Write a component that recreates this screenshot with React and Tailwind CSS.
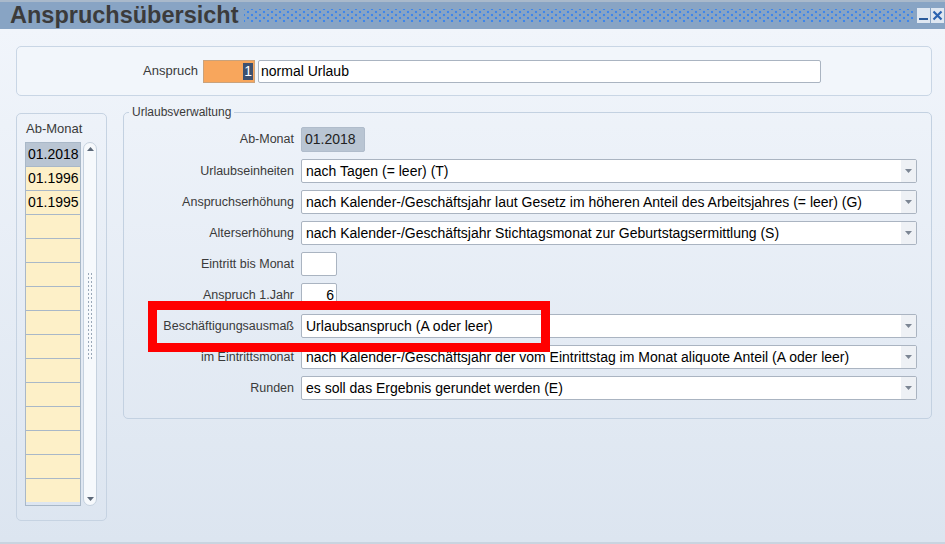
import React from 'react';

const font = { fontFamily: '"Liberation Sans", Arial, sans-serif' };

const rows = [
  { label: 'Urlaubseinheiten', value: 'nach Tagen (= leer) (T)' },
  {
    label: 'Anspruchserhöhung',
    value: 'nach Kalender-/Geschäftsjahr laut Gesetz im höheren Anteil des Arbeitsjahres (= leer) (G)',
  },
  { label: 'Alterserhöhung', value: 'nach Kalender-/Geschäftsjahr Stichtagsmonat zur Geburtstagsermittlung (S)' },
];

const rowsBottom = [
  { label: 'Beschäftigungsausmaß', value: 'Urlaubsanspruch (A oder leer)' },
  {
    label: 'im Eintrittsmonat',
    value: 'nach Kalender-/Geschäftsjahr der vom Eintrittstag im Monat aliquote Anteil (A oder leer)',
  },
  { label: 'Runden', value: 'es soll das Ergebnis gerundet werden (E)' },
];

const months = ['01.2018', '01.1996', '01.1995', '', '', '', '', '', '', '', '', '', '', '', ''];

const Label = ({ children }) => (
  <div className="w-[177px] shrink-0 text-right text-[12.5px] text-[#3a3a3a] pr-[7px]">{children}</div>
);

const Select = ({ value }) => (
  <div className="flex-1 min-w-0 h-[24px] flex bg-white border border-[#aab4c1] rounded-[2px] overflow-hidden">
    <div className="flex-1 min-w-0 pl-[4px] text-[14px] leading-[22px] text-black whitespace-nowrap overflow-hidden">
      {value}
    </div>
    <div className="w-[15px] bg-[#eef1f5] flex items-center justify-center">
      <svg width="7" height="4" viewBox="0 0 7 4">
        <path d="M0 0 L7 0 L3.5 4 Z" fill="#7c8694" />
      </svg>
    </div>
  </div>
);

const Row = ({ children, className = '' }) => (
  <div className={`flex items-center h-[24px] ${className}`}>{children}</div>
);

// window buttons: minimize + close
const WindowButtons = () => (
  <svg width="28" height="15" viewBox="0 0 28 15" className="shrink-0">
    <rect x="0" y="0" width="13" height="15" fill="#dfe7f1" />
    <rect x="2" y="10" width="9" height="2" fill="#2a5a9a" />
    <rect x="14" y="0" width="13" height="15" fill="#dfe7f1" />
    <path d="M16.5 3.5 L24.5 11.5 M24.5 3.5 L16.5 11.5" stroke="#2a62b0" strokeWidth="2.2" />
  </svg>
);

const TitleBar = () => (
  <div className="w-[945px] h-[29px] shrink-0 bg-[#88a4c4] border-t-2 border-[#a9b9cb] flex items-center pl-[10px]">
    <div className="shrink-0 text-[23.5px] font-bold text-[#3b3b3b] leading-none">Anspruchsübersicht</div>
    <div className="flex-1 min-w-0 h-[13px] ml-[5px] mr-[3px] bg-[radial-gradient(circle,#3f86ea_1.1px,transparent_1.6px),radial-gradient(circle,#3f86ea_1.1px,transparent_1.6px)] bg-[length:8px_6px] bg-[position:0_0,4px_3px]" />
    <WindowButtons />
  </div>
);

const Scrollbar = () => (
  <div className="w-[14px] h-[364px] ml-[2px] rounded-full border border-[#c5d1de] bg-[#f6f9fc] flex flex-col items-center justify-between py-[4px]">
    <svg width="7" height="4" viewBox="0 0 7 4">
      <path d="M0 4 L7 4 L3.5 0 Z" fill="#5c6878" />
    </svg>
    <div className="flex-1 w-full flex items-center justify-center">
      <div className="w-[6px] h-[88px] mt-[-16px] bg-[radial-gradient(circle,#9aa8b8_0.7px,transparent_1px)] bg-[length:3px_4px]" />
    </div>
    <svg width="7" height="4" viewBox="0 0 7 4">
      <path d="M0 0 L7 0 L3.5 4 Z" fill="#5c6878" />
    </svg>
  </div>
);

export default function App() {
  return (
    <div className="w-[945px] h-[544px] flex flex-col overflow-hidden" style={font}>
      <TitleBar />
      <div className="flex-1 bg-gradient-to-b from-[#f1f5fb] to-[#dce5f0] pt-[17px] pl-[16px] pr-[13px] border-b-2 border-[#c9d4e0]">
        {/* Anspruch header box */}
        <div className="h-[50px] bg-[#f2f6fb] border border-[#c9d6e5] rounded-[5px] flex items-center">
          <div className="w-[186px] text-right text-[13px] text-[#3a3a3a] pr-[5px]">Anspruch</div>
          <div className="w-[52px] h-[23px] bg-[#f8a65c] border border-[#c9a27c] flex items-center justify-end pr-[1px]">
            <span className="bg-[#3e5170] text-white text-[14px] leading-[17px] px-[1px]">1</span>
          </div>
          <div className="w-[563px] h-[23px] ml-[3px] bg-white border border-[#aab4c1] rounded-[2px] pl-[2px] text-[14px] leading-[21px] text-black">
            normal Urlaub
          </div>
        </div>

        <div className="flex items-start mt-[9px]">
          {/* Left month list */}
          <div className="w-[91px] h-[408px] mt-[8px] border border-[#c6d3e2] rounded-[5px] pl-[8px] pt-[7px]">
            <div className="text-[13px] text-[#3a3a3a] pl-[1px] leading-[15px]">Ab-Monat</div>
            <div className="flex mt-[6px]">
              <div className="w-[56px] border-l border-r border-b border-[#a9b8c8]">
                {months.map((m, i) => (
                  <div
                    key={i}
                    className={`h-[24px] border-t border-[#a9b8c8] pl-[2px] text-[14px] leading-[22px] text-black ${
                      i === 0 ? 'bg-[#b9c5d3]' : 'bg-[#fdf0c8]'
                    }`}
                  >
                    {m}
                  </div>
                ))}
              </div>
              <Scrollbar />
            </div>
          </div>

          {/* Urlaubsverwaltung */}
          <fieldset className="relative min-w-0 w-[809px] h-[314px] ml-[16px] border border-[#c3d1e1] rounded-[5px] pl-[5px] pr-[14px]">
            <legend className="px-[3px] text-[12px] leading-[14px] text-[#3a3a3a]">Urlaubsverwaltung</legend>
            <div className="pt-[8px] ml-[-5px]">
              <Row className="h-[25px]">
                <Label>Ab-Monat</Label>
                <div className="w-[64px] h-[25px] bg-[#b9c5d3] border border-[#b0bccb] rounded-[2px] pl-[3px] text-[14px] leading-[23px] text-[#222]">
                  01.2018
                </div>
              </Row>
              {rows.map(r => (
                <Row key={r.label} className="mt-[7px]">
                  <Label>{r.label}</Label>
                  <Select value={r.value} />
                </Row>
              ))}
              <Row className="mt-[7px]">
                <Label>Eintritt bis Monat</Label>
                <div className="w-[36px] h-[24px] bg-white border border-[#aab4c1] rounded-[2px]" />
              </Row>
              <Row className="mt-[7px]">
                <Label>Anspruch 1.Jahr</Label>
                <div className="w-[36px] h-[24px] bg-white border border-[#aab4c1] rounded-[2px] text-right pr-[2px] text-[14px] leading-[22px] text-black">
                  6
                </div>
              </Row>
              {rowsBottom.map(r => (
                <Row key={r.label} className="mt-[7px]">
                  <Label>{r.label}</Label>
                  <Select value={r.value} />
                </Row>
              ))}
            </div>
            {/* red highlight */}
            <div className="absolute left-[24px] top-[182px] w-[402px] h-[51px] border-[9px] border-[#ff0000] pointer-events-none" />
          </fieldset>
        </div>
      </div>
    </div>
  );
}
